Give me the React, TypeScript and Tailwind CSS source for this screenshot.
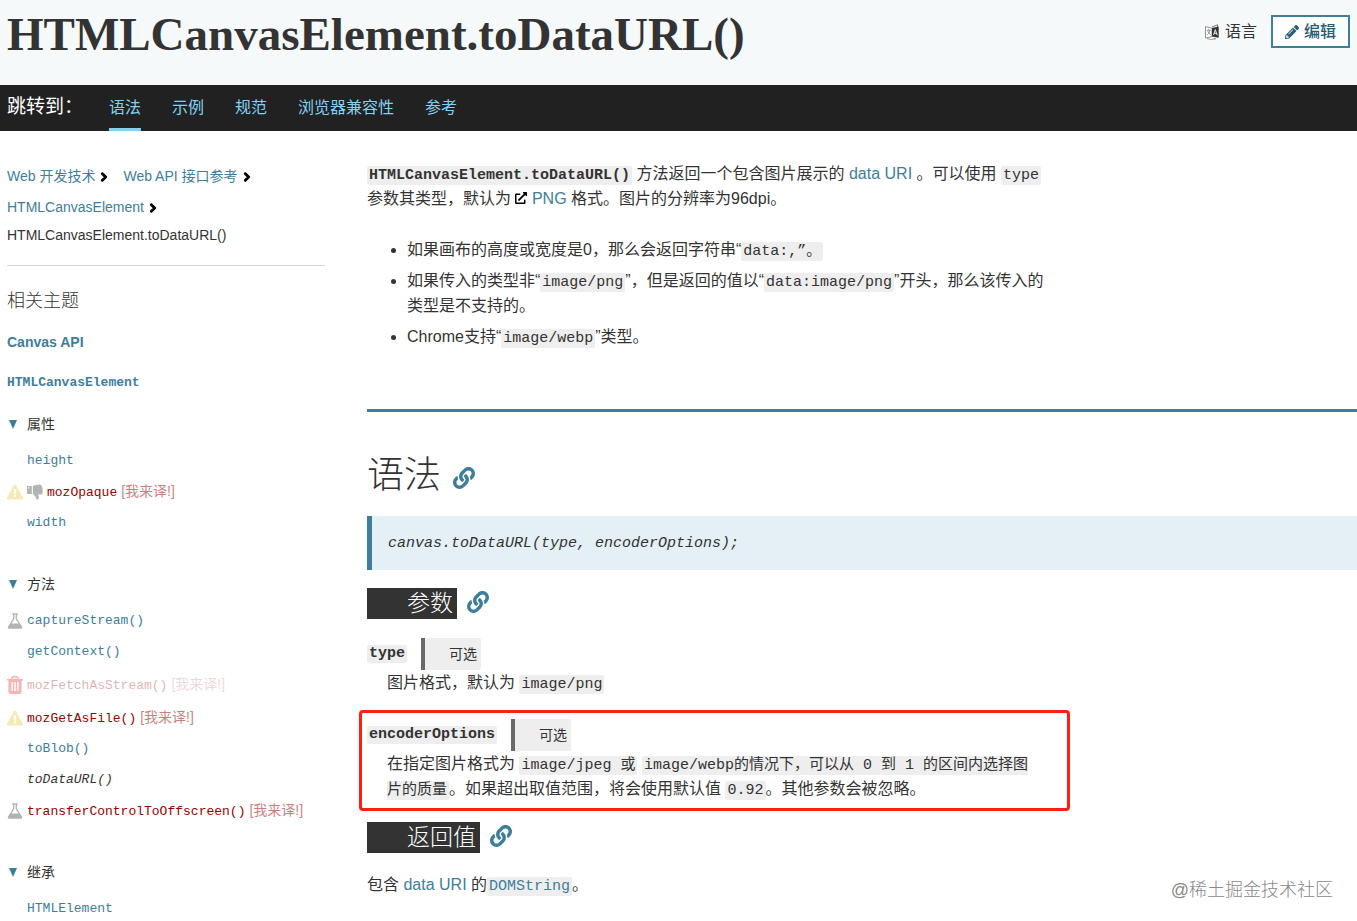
import React from "react";
import { FaChevronRight, FaExternalLinkAlt, FaLink, FaPencilAlt } from "react-icons/fa";

const FLASK =
  "M1591 1448q56 89 21.5 152.5t-140.5 63.5h-1152q-106 0-140.5-63.5t21.5-152.5l503-793v-399h-64q-26 0-45-19t-19-45 19-45 45-19h512q26 0 45 19t19 45-19 45-45 19h-64v399zm-779-725l-272 429h712l-272-429-20-31v-436h-128v436z";
const WARNING =
  "M1024 1375v-190q0-14-9.5-23.5t-22.5-9.5h-192q-13 0-22.5 9.5t-9.5 23.5v190q0 14 9.5 23.5t22.5 9.5h192q13 0 22.5-9.5t9.5-23.5zm-2-374l18-459q0-12-10-19-13-11-24-11h-220q-11 0-24 11-10 7-10 21l17 457q0 10 10 16.5t24 6.5h185q14 0 23.5-6.5t10.5-16.5zm-14-934l768 1408q35 63-2 126-17 29-46.5 46t-63.5 17h-1536q-34 0-63.5-17t-46.5-46q-37-63-2-126l768-1408q17-31 47-49t65-18 65 18 47 49z";
const TRASH =
  "M704 1376v-704q0-14-9-23t-23-9h-64q-14 0-23 9t-9 23v704q0 14 9 23t23 9h64q14 0 23-9t9-23zm256 0v-704q0-14-9-23t-23-9h-64q-14 0-23 9t-9 23v704q0 14 9 23t23 9h64q14 0 23-9t9-23zm256 0v-704q0-14-9-23t-23-9h-64q-14 0-23 9t-9 23v704q0 14 9 23t23 9h64q14 0 23-9t9-23zm-544-992h448l-48-117q-7-9-17-11h-317q-10 2-17 11zm928 32v64q0 14-9 23t-23 9h-96v948q0 83-47 143.5t-113 60.5h-832q-66 0-113-58.5t-47-141.5v-952h-96q-14 0-23-9t-9-23v-64q0-14 9-23t23-9h309l70-167q15-37 54-63t79-26h320q40 0 79 26t54 63l70 167h309q14 0 23 9t9 23z";

function FlaskIcon() {
  return (
    <svg viewBox="128 100 1536 1600" className="h-4 w-4 shrink-0 fill-[#b3b3b3]" aria-hidden="true">
      <path d={FLASK} />
    </svg>
  );
}

function WarningIcon() {
  return (
    <svg viewBox="0 0 1792 1664" className="h-4 w-4 shrink-0 fill-[#f6e9b2]" aria-hidden="true">
      <path d={WARNING} />
    </svg>
  );
}

function TrashIcon() {
  return (
    <svg viewBox="192 128 1408 1536" preserveAspectRatio="none" className="h-[18px] w-4 shrink-0 fill-[#f5b3b3]" aria-hidden="true">
      <path d={TRASH} />
    </svg>
  );
}

function ThumbsDownIcon() {
  return (
    <svg viewBox="0 0 16 16" className="h-4 w-4 shrink-0 fill-[#b3b3b3]" aria-hidden="true">
      <path fillRule="evenodd" d="M.5 2h3.8q.5 0 .5.5v7q0 .5-.5.5H.5q-.5 0-.5-.5v-7q0-.5.5-.5zM1.8 3.2a.7.7 0 1 0 .01 0z" />
      <path d="M5.8 2C8 1.6 9.5.6 12 .6c2.300 0 3 1 2.900 2.300.9.8.8 1.800.4 2.500.7.8.6 1.800.2 2.500.4 1.500-.5 2.700-1.700 2.700H11c.8 1.400 1 2.800.7 3.900-.4 1.300-2.300 1.500-2.700.2-.3-1.200-.5-2.200-1.500-3.200C6.700 10.800 6.500 10 5.800 9.800z" />
    </svg>
  );
}

function LanguageIcon() {
  return (
    <svg viewBox="0 0 14 16" className="h-4 w-3.5" fill="none" aria-hidden="true">
      <path d="M7 3 L12.5 0.8 V3.5" stroke="#555" strokeWidth="0.8" />
      <path d="M0.5 2.6 L7 4.2 V12.6 L0.5 14 Z" fill="#fff" stroke="#777" strokeWidth="0.8" />
      <path d="M7 4 L13.7 2.6 V13.8 L7 12.6 Z" fill="#333" />
      <path d="M1.8 6.2 L5.8 6.4 M3.7 4.9 V6.3 M5 6.4 Q4.4 9.6 1.8 11.2 M2.5 6.5 Q3.4 9.4 5.8 10.8" stroke="#777" strokeWidth="0.7" />
      <path d="M8.6 11 L10.3 5.6 L12.2 11.2 M9.2 9.3 H11.6" stroke="#fff" strokeWidth="0.9" />
      <path d="M2 14.6 Q6.5 16.6 10.5 14.6 M10.5 14.6 L9 14.1 M10.5 14.6 L9.6 15.8" stroke="#777" strokeWidth="0.7" />
    </svg>
  );
}

function Code({ children, className = "" }: { children: React.ReactNode; className?: string }) {
  return (
    <code
      className={`rounded-xs bg-[#eee] px-0.5 py-px font-['Liberation_Mono','Noto_Sans_CJK_SC',monospace] text-[15px] leading-4 ${className}`}
    >
      {children}
    </code>
  );
}

function TextLink({ children }: { children: React.ReactNode }) {
  return (
    <a href="#" className="text-[#3d7e9a]">
      {children}
    </a>
  );
}

function Anchor({ label }: { label: string }) {
  return (
    <a href="#" aria-label={label} className="text-[#3d7e9a]">
      <FaLink className="h-[22px] w-[22px]" />
    </a>
  );
}

function SubHeading({ children }: { children: string }) {
  return (
    <div className="flex items-center gap-2.5">
      <h3 className="bg-[#333] pr-1 pl-10 text-[23px] leading-[31px] font-light text-white">{children}</h3>
      <div className="pb-1">
        <Anchor label={children} />
      </div>
    </div>
  );
}

function Term({ children }: { children: string }) {
  return (
    <dt className="flex items-center gap-3.5">
      <Code className="py-0.5 font-bold">{children}</Code>
      <span className="rounded-r-xs border-l-4 border-[#696969] bg-[#eee] pr-1 pl-6 text-sm leading-8">可选</span>
    </dt>
  );
}

function Crumb({ children }: { children: string }) {
  return (
    <li className="flex items-center gap-1">
      <TextLink>{children}</TextLink>
      <FaChevronRight strokeWidth={60} className="h-2.5 w-2.5 text-black" />
    </li>
  );
}

type Tone = "link" | "missing" | "faded" | "current";

const toneClass: Record<Tone, string> = {
  link: "text-[#3d7e9a]",
  missing: "text-[#900]",
  faded: "text-[#900] opacity-30",
  current: "text-[#333] italic",
};

type Entry = { name: string; tone?: Tone; icon?: React.ReactNode; extra?: React.ReactNode; tall?: boolean };

function Group({ title, entries }: { title: string; entries: Entry[] }) {
  return (
    <section>
      <h4 className="flex h-[31px] items-center gap-2 text-sm">
        <svg viewBox="0 0 12 10" className="h-2.5 w-3 fill-[#3d7e9a]" aria-hidden="true">
          <path d="M2 1h8L6 10z" />
        </svg>
        {title}
      </h4>
      <ul className="pt-1.5">
        {entries.map((e) => {
          const tone = e.tone ?? "link";
          return (
            <li key={e.name} className={`flex items-center gap-1 text-sm ${e.tall ? "h-[35px]" : "h-[31px]"}`}>
              <span className="flex w-4 shrink-0">{e.icon}</span>
              {e.extra}
              <a href="#" className={`flex items-baseline gap-1 leading-[31px] ${toneClass[tone]}`}>
                <code className="font-['Liberation_Mono',monospace] text-[13px]">{e.name}</code>
                {(tone === "missing" || tone === "faded") && <span className="opacity-50">[我来译!]</span>}
              </a>
            </li>
          );
        })}
      </ul>
    </section>
  );
}

const properties: Entry[] = [
  { name: "height" },
  { name: "mozOpaque", tone: "missing", icon: <WarningIcon />, extra: <ThumbsDownIcon /> },
  { name: "width" },
];

const methods: Entry[] = [
  { name: "captureStream()", icon: <FlaskIcon /> },
  { name: "getContext()" },
  { name: "mozFetchAsStream()", tone: "faded", icon: <TrashIcon />, tall: true },
  { name: "mozGetAsFile()", tone: "missing", icon: <WarningIcon /> },
  { name: "toBlob()" },
  { name: "toDataURL()", tone: "current" },
  { name: "transferControlToOffscreen()", tone: "missing", icon: <FlaskIcon /> },
];

const sections = ["语法", "示例", "规范", "浏览器兼容性", "参考"];

export default function App() {
  return (
    <div className="relative bg-white font-['Liberation_Sans','Noto_Sans_CJK_SC',sans-serif] text-base text-[#333]">
      <header className="flex h-[85px] items-start justify-between bg-[#f5f9fa] px-[7px]">
        <h1 className="pt-1 font-['Liberation_Serif',serif] text-[47px] leading-[60px] font-bold">
          HTMLCanvasElement.toDataURL()
        </h1>
        <div className="flex items-center gap-3.5 pt-[15px]">
          <button className="flex items-center gap-1.5">
            <LanguageIcon />
            语言
          </button>
          <button className="flex h-[33px] items-center gap-[5px] border-2 border-[#3d7e9a] bg-white px-3 font-medium text-[#285c76]">
            <FaPencilAlt className="h-3.5 w-3.5" />
            编辑
          </button>
        </div>
      </header>

      <nav className="flex h-[46px] bg-[#212121] px-[7px] text-[#83d0f2]">
        <span className="w-[102px] text-[19px] leading-[44px] text-white">跳转到：</span>
        <ul className="flex gap-[31px]">
          {sections.map((s, i) => (
            <li key={s} className="flex">
              <a
                href="#"
                className={`border-b-3 pt-px leading-[44px] ${i === 0 ? "border-[#83d0f2]" : "border-transparent"}`}
              >
                {s}
              </a>
            </li>
          ))}
        </ul>
      </nav>

      <div className="flex">
        <aside className="mr-[42px] ml-[7px] w-[318px] shrink-0 pt-[30px]">
          <ol className="flex flex-wrap gap-x-3.5 border-b border-[#d6d6d6] pb-[18px] text-sm leading-[31px]">
            <Crumb>Web 开发技术</Crumb>
            <Crumb>Web API 接口参考</Crumb>
            <Crumb>HTMLCanvasElement</Crumb>
            <li className="w-full leading-6">HTMLCanvasElement.toDataURL()</li>
          </ol>
          <h2 className="pt-5 text-lg leading-[31px] font-light">相关主题</h2>
          <ul className="text-sm font-bold text-[#3d7e9a]">
            <li className="flex h-10 items-center pt-2.5">
              <a href="#">Canvas API</a>
            </li>
            <li className="flex h-[41px] items-center pt-3">
              <a href="#" className="font-['Liberation_Mono',monospace] text-[13px]">
                HTMLCanvasElement
              </a>
            </li>
          </ul>
          <div className="flex flex-col gap-[30px] pt-2.5">
            <Group title="属性" entries={properties} />
            <Group title="方法" entries={methods} />
            <Group title="继承" entries={[{ name: "HTMLElement" }]} />
          </div>
        </aside>

        <main className="min-w-0 flex-1 pt-[30px]">
          <div className="max-w-[680px] leading-[25px]">
            <p>
              <Code className="font-bold">HTMLCanvasElement.toDataURL()</Code> 方法返回一个包含图片展示的{" "}
              <TextLink>data URI</TextLink> 。可以使用 <Code>type</Code> 参数其类型，默认为{" "}
              <FaExternalLinkAlt className="inline h-3 w-3 align-baseline text-black" /> <TextLink>PNG</TextLink>{" "}
              格式。图片的分辨率为96dpi。
            </p>
            <ul className="flex list-disc flex-col gap-1.5 pt-[26px] pl-10">
              <li>
                如果画布的高度或宽度是0，那么会返回字符串“<Code>data:,”。</Code>
              </li>
              <li>
                如果传入的类型非“<Code>image/png</Code>”，但是返回的值以“<Code>data:image/png</Code>”开头，那么该传入的类型是不支持的。
              </li>
              <li>
                Chrome支持“<Code>image/webp</Code>”类型。
              </li>
            </ul>
          </div>

          <section className="mt-[60px] border-t-3 border-[#3d7e9a]">
            <div className="flex items-center gap-3 pt-10">
              <h2 className="text-[37px] leading-[48px] font-light">语法</h2>
              <div className="pt-1">
                <Anchor label="语法" />
              </div>
            </div>
            <pre className="mt-4 border-l-5 border-[#3d7e9a] bg-[#e4f0f5] px-4 pt-0.5 font-['Liberation_Mono',monospace] text-[15px] leading-[52px] italic">
              canvas.toDataURL(type, encoderOptions);
            </pre>

            <div className="pt-[18px]">
              <SubHeading>参数</SubHeading>
            </div>
            <dl className="max-w-[703px] pt-[19px] leading-[25px]">
              <div>
                <Term>type</Term>
                <dd className="pl-5">
                  图片格式，默认为 <Code>image/png</Code>
                </dd>
              </div>
              <div className="mt-[15px] -ml-2 rounded-sm border-3 border-[#ff1f10] pt-1.5 pr-7 pb-[7px] pl-[5px]">
                <Term>encoderOptions</Term>
                <dd className="pl-5">
                  在指定图片格式为 <Code>image/jpeg 或</Code>{" "}
                  <Code>image/webp的情况下，可以从 0 到 1 的区间内选择图片的质量</Code>。如果超出取值范围，将会使用默认值{" "}
                  <Code>0.92</Code>。其他参数会被忽略。
                </dd>
              </div>
            </dl>

            <div className="pt-[11px]">
              <SubHeading>返回值</SubHeading>
            </div>
            <p className="pt-[19px] leading-[25px]">
              包含 <TextLink>data URI</TextLink> 的
              <Code>
                <TextLink>DOMString</TextLink>
              </Code>
              。
            </p>
          </section>
        </main>
      </div>

      <p className="absolute right-6 bottom-5 text-lg font-light text-[#888]">@稀土掘金技术社区</p>
    </div>
  );
}
